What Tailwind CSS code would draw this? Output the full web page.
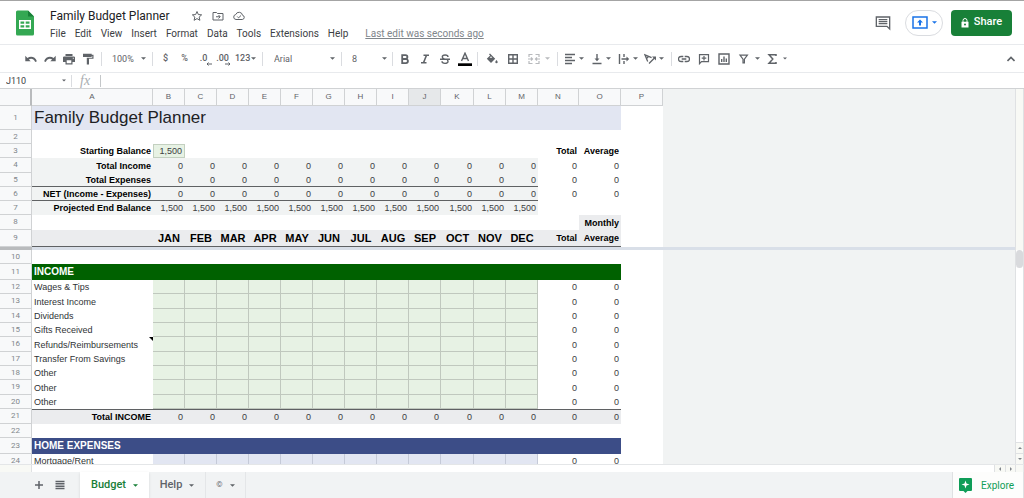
<!DOCTYPE html>
<html lang="en">
<head>
<meta charset="utf-8">
<meta name="viewport" content="width=device-width, initial-scale=1">
<title>Family Budget Planner</title>
<script src="https://cdn.jsdelivr.net/npm/@tailwindcss/browser@4"></script>
</head>
<body class="flex h-screen flex-col overflow-hidden bg-white font-['Roboto',sans-serif] text-[#202124]">
<svg class="hidden" aria-hidden="true">
  <symbol id="caret" viewBox="0 0 6 3"><path d="M0 0h6L3 3z" fill="currentColor"/></symbol>
</svg>

<header class="flex h-[45px] shrink-0 items-center border-t border-b border-t-[#a4a4a4] border-b-[#e8eaed] pl-4 pr-3">
  <svg class="h-[26px] w-[18px] shrink-0" viewBox="0 0 18 25" aria-label="Sheets"><path d="M1.500 0H12l6 6v17.500a1.500 1.500 0 0 1-1.500 1.500h-15A1.500 1.500 0 0 1 0 23.500v-22A1.500 1.500 0 0 1 1.500 0z" fill="#34a853"/><path d="M12 0l6 6h-6z" fill="#188038"/><path d="M3 9.500h12v9H3zM4.500 11v2.200h3.700V11zm5.200 0v2.200h3.800V11zm-5.200 3.700V17h3.700v-2.300zm5.200 0V17h3.800v-2.300z" fill="#fff" fill-rule="evenodd"/></svg>
  <div class="ml-4 flex min-w-0 flex-1 flex-col pt-1">
    <div class="flex h-[18px] items-center text-[#5f6368]">
      <h1 class="text-[12px] leading-4 text-[#202124]">Family Budget Planner</h1>
      <button class="ml-[21px]" aria-label="Star"><svg class="size-3" viewBox="0 0 24 24" fill="none" stroke="currentColor" stroke-width="2"><path d="M12 3l2.700 6.100 6.600.6-5 4.400 1.500 6.500L12 17.200l-5.800 3.400 1.500-6.500-5-4.400 6.600-.6z"/></svg></button>
      <button class="ml-[9px]" aria-label="Move"><svg class="size-3" viewBox="0 0 24 24" fill="none" stroke="currentColor" stroke-width="2"><path d="M2 5h7l2 2h11v13H2zM8 13.500h8M13 10l3.500 3.500L13 17"/></svg></button>
      <button class="ml-[9px]" aria-label="Document status"><svg class="size-3" viewBox="0 0 24 24" fill="none" stroke="currentColor" stroke-width="2"><path d="M6 19a5 5 0 0 1-.5-9.900A7 7 0 0 1 19 10.500 4.300 4.300 0 0 1 18.500 19zM8.500 13l2.700 2.700L16 11"/></svg></button>
    </div>
    <nav class="flex h-[18px] items-center gap-[9px] text-[10px] leading-4 text-[#3c4043]">
      <button>File</button><button>Edit</button><button>View</button><button>Insert</button><button>Format</button><button>Data</button><button>Tools</button><button>Extensions</button><button>Help</button>
      <a href="#history" class="ml-2 text-[#80868b] underline">Last edit was seconds ago</a>
    </nav>
  </div>
  <div class="flex items-center">
    <button class="mr-[14px] text-[#5f6368]" aria-label="Comments"><svg class="size-4" viewBox="0 0 24 24" fill="none" stroke="currentColor" stroke-width="2"><path d="M2 3h20v18l-4-4H2zM5.500 7h13M5.500 10h13M5.500 13h13"/></svg></button>
    <button class="mr-2 flex h-[26px] w-[38px] items-center justify-center gap-1 rounded-full border border-[#dadce0] text-[#1a73e8]" aria-label="Present"><svg class="h-[13px] w-4" viewBox="0 0 16 13"><path d="M1 1h14v11H1z" fill="none" stroke="currentColor" stroke-width="1.500"/><path d="M8 3.500l3 3H9V9.500H7v-3H5z" fill="currentColor"/></svg><svg class="h-[3px] w-[5px]"><use href="#caret"/></svg></button>
    <button class="flex h-[26px] w-[61px] items-center justify-center gap-[5px] rounded bg-[#188038] text-[11px] font-medium text-white"><svg class="h-[10px] w-2" viewBox="0 0 8 10"><path d="M2 4V2.500a2 2 0 0 1 4 0V4" fill="none" stroke="#fff"/><path d="M.5 3.800h7V9.500h-7zM4 5.600a1 1 0 1 0 0 2 1 1 0 0 0 0-2z" fill="#fff" fill-rule="evenodd"/></svg>Share</button>
  </div>
</header>

<div class="flex h-7 shrink-0 items-center border-b border-[#e8eaed] pl-5 text-[9px] text-[#5f6368]" role="toolbar" aria-label="Main toolbar">
  <div class="flex h-[14px] w-[82px] items-center justify-between border-r border-[#dadce0] pl-[5px] pr-[7px]">
    <button aria-label="Undo"><svg class="size-3" viewBox="0 0 12 12"><path d="M.3 2.800v5.400h5.400L3.900 6.500C5.800 5.200 8.800 5.600 10.200 8.900l1.700-.6C10.300 3.400 5.600 2.600 2.400 4.900z" fill="currentColor"/></svg></button>
    <button aria-label="Redo"><svg class="size-3" viewBox="0 0 12 12"><path d="M11.700 2.800v5.400H6.300l1.800-1.700C6.200 5.200 3.200 5.600 1.800 8.900L.1 8.300C1.700 3.400 6.400 2.600 9.600 4.900z" fill="currentColor"/></svg></button>
    <button aria-label="Print"><svg class="size-3" viewBox="0 0 12 12"><path d="M2.500 1h7v2h-7zM1.500 3.500h9A1.300 1.300 0 0 1 12 5v4H9.500v2.500h-7V9H0V5a1.300 1.300 0 0 1 1.500-1.500zM3.700 7.200v3h4.600v-3zM9.800 4.800v1h1v-1z" fill="currentColor" fill-rule="evenodd"/></svg></button>
    <button aria-label="Paint format"><svg class="size-3" viewBox="0 0 12 12"><path d="M1 .8h8.700v1h1.800v4H7v5.700H4.800V4.700h5.500V3H9.700v1H1z" fill="currentColor"/></svg></button>
  </div>
  <div class="relative flex h-[14px] w-[51px] items-center border-r border-[#dadce0]">
    <select aria-label="Zoom" class="w-full appearance-none bg-transparent pl-[10px] leading-3"><option>100%</option></select>
    <svg class="pointer-events-none absolute right-[6px] h-[3px] w-[5px]"><use href="#caret"/></svg>
  </div>
  <div class="flex h-[14px] w-[110px] items-center border-r border-[#dadce0] pl-[3px] font-medium">
    <button class="w-[19px]" aria-label="Currency">$</button>
    <button class="w-[19px]" aria-label="Percent">%</button>
    <button class="relative w-[19px]" aria-label="Decrease decimals">.0<svg class="absolute right-px -bottom-px h-1 w-[6px]" viewBox="0 0 6 4"><path d="M6 2H1M2.500.5L1 2l1.500 1.500" fill="none" stroke="currentColor"/></svg></button>
    <button class="relative w-[19px]" aria-label="Increase decimals">.00<svg class="absolute right-px -bottom-px h-1 w-[6px]" viewBox="0 0 6 4"><path d="M0 2h5M3.500.5L5 2 3.500 3.500" fill="none" stroke="currentColor"/></svg></button>
    <button class="ml-[3px] flex items-center gap-px" aria-label="More formats">123<svg class="h-[3px] w-[5px]"><use href="#caret"/></svg></button>
  </div>
  <div class="relative flex h-[14px] w-[79px] items-center border-r border-[#dadce0]">
    <select aria-label="Font" class="w-full appearance-none bg-transparent pl-[11px] leading-3"><option>Arial</option></select>
    <svg class="pointer-events-none absolute right-[6px] h-[3px] w-[5px]"><use href="#caret"/></svg>
  </div>
  <div class="relative flex h-[14px] w-[51px] items-center border-r border-[#dadce0]">
    <select aria-label="Font size" class="w-full appearance-none bg-transparent pl-[10px] leading-3"><option>8</option></select>
    <svg class="pointer-events-none absolute right-[5px] h-[3px] w-[5px]"><use href="#caret"/></svg>
  </div>
  <div class="flex h-[14px] w-[85px] items-center border-r border-[#dadce0] pl-[2px]">
    <button class="flex w-5 justify-center" aria-label="Bold"><svg class="size-3" viewBox="0 0 12 12"><path d="M3.200 2.200h3.300a1.900 1.900 0 0 1 0 3.800H3.200zM3.200 6h3.700a2 2 0 0 1 0 4.100H3.200z" fill="none" stroke="currentColor" stroke-width="1.800"/></svg></button>
    <button class="flex w-5 justify-center" aria-label="Italic"><svg class="size-3" viewBox="0 0 12 12"><path d="M4.500 2.300H10M2 9.700h5.500M7.500 2.300L4.500 9.700" fill="none" stroke="currentColor" stroke-width="1.600"/></svg></button>
    <button class="flex w-5 justify-center" aria-label="Strikethrough"><svg class="size-3" viewBox="0 0 12 12"><path d="M1 6.300h10M9 3.900C9 1.300 3.300 1.300 3.300 3.900c0 1 .9 1.500 2 1.900M3 8.300c0 2.700 6 2.700 6 .2 0-.7-.3-1.200-.8-1.600" fill="none" stroke="currentColor" stroke-width="1.400"/></svg></button>
    <button class="flex w-5 justify-center" aria-label="Text color"><svg class="h-[14px] w-[14px]" viewBox="0 0 14 14"><path d="M3.500 9L7 1.200 10.500 9M4.700 6.500h4.600" fill="none" stroke="currentColor" stroke-width="1.400"/><path d="M0 11.300h14V14H0z" fill="#000"/></svg></button>
  </div>
  <div class="flex h-[14px] w-[80px] items-center border-r border-[#dadce0] pl-[3px]">
    <button class="flex w-[21px] justify-center" aria-label="Fill color"><svg class="size-3" viewBox="0 0 12 12"><path d="M4 .5l5.200 5.200L5 9.900.8 5.700 4.100 2.400 3 1.300zM5 3.300L3.600 4.700h2.800zM10.500 7s1.200 1.300 1.200 2a1.200 1.200 0 0 1-2.400 0c0-.7 1.200-2 1.200-2z" fill="currentColor" fill-rule="evenodd"/></svg></button>
    <button class="flex w-[21px] justify-center" aria-label="Borders"><svg class="size-3" viewBox="0 0 12 12"><path d="M1.700 1.700h8.600v8.600H1.700zM6 1.700v8.600M1.700 6h8.600" fill="none" stroke="currentColor" stroke-width="1.400"/></svg></button>
    <button class="flex w-[21px] justify-center text-[#b8babd]" aria-label="Merge cells"><svg class="size-3" viewBox="0 0 12 12"><path d="M4.500 1.500H1V4M7.500 1.500H11V4M4.500 10.500H1V8M7.500 10.500H11V8M0 6h4.500M12 6H7.500M3 4.500L4.500 6 3 7.500M9 4.500L7.500 6 9 7.500" fill="none" stroke="currentColor" stroke-width="1.200"/></svg></button>
    <button class="ml-px text-[#b8babd]" aria-label="Merge type"><svg class="h-[3px] w-[5px]"><use href="#caret"/></svg></button>
  </div>
  <div class="flex h-[14px] w-[114px] items-center border-r border-[#dadce0] pl-[6px]">
    <button class="flex w-[27px] items-center gap-[3px]" aria-label="Horizontal align"><svg class="size-3" viewBox="0 0 12 12"><path d="M1 1.500h10M1 4.500h7M1 7.500h10M1 10.500h7" fill="none" stroke="currentColor" stroke-width="1.400"/></svg><svg class="h-[3px] w-[5px]"><use href="#caret"/></svg></button>
    <button class="flex w-[27px] items-center gap-[3px]" aria-label="Vertical align"><svg class="size-3" viewBox="0 0 12 12"><path d="M1.500 10.500h9M6 1v6" fill="none" stroke="currentColor" stroke-width="1.400"/><path d="M3.500 5.500h5L6 8.300z" fill="currentColor"/></svg><svg class="h-[3px] w-[5px]"><use href="#caret"/></svg></button>
    <button class="flex w-[27px] items-center gap-[3px]" aria-label="Text wrapping"><svg class="size-3" viewBox="0 0 12 12"><path d="M1.500 1v10M6 1v3M6 8v3M3.500 6H10" fill="none" stroke="currentColor" stroke-width="1.400"/><path d="M8.500 3.500v5L11.200 6z" fill="currentColor"/></svg><svg class="h-[3px] w-[5px]"><use href="#caret"/></svg></button>
    <button class="flex w-[27px] items-center gap-[3px]" aria-label="Text rotation"><svg class="size-3" viewBox="0 0 12 12"><path d="M3.700 8.500L.9 1.800 7.600 4.600M2.600 5.500L4.700 3.400M5 10.500L10.500 5" fill="none" stroke="currentColor" stroke-width="1.300"/><path d="M8 3.500h4v4z" fill="currentColor"/></svg><svg class="h-[3px] w-[5px]"><use href="#caret"/></svg></button>
  </div>
  <div class="flex items-center pl-[2px]">
    <button class="flex w-5 justify-center" aria-label="Insert link"><svg class="size-3" viewBox="0 0 12 12"><path d="M5.300 3.500H3a2.500 2.500 0 0 0 0 5h2.300M6.700 3.500H9a2.500 2.500 0 0 1 0 5H6.700M3.700 6h4.600" fill="none" stroke="currentColor" stroke-width="1.300"/></svg></button>
    <button class="flex w-5 justify-center" aria-label="Insert comment"><svg class="size-3" viewBox="0 0 12 12"><path d="M1.500 10.700V1.600h9v7h-7zM6 3v4.500M3.700 5.200h4.600" fill="none" stroke="currentColor" stroke-width="1.200"/></svg></button>
    <button class="flex w-5 justify-center" aria-label="Insert chart"><svg class="size-3" viewBox="0 0 12 12"><path d="M1 1h10v10H1zM3.700 9V6M6 9V3.500M8.300 9V5.500" fill="none" stroke="currentColor" stroke-width="1.400"/></svg></button>
    <button class="flex w-5 justify-center" aria-label="Create filter"><svg class="size-3" viewBox="0 0 12 12"><path d="M2 2.200h7.400L6.400 6.200V9.800H5V6.200z" fill="none" stroke="currentColor" stroke-width="1.200"/></svg></button>
    <button class="w-3" aria-label="Filter views"><svg class="ml-px h-[3px] w-[5px]"><use href="#caret"/></svg></button>
    <button class="flex w-4 items-center" aria-label="Functions"><svg class="size-3" viewBox="0 0 12 12"><path d="M10 3V1.700H3L6.800 6 3 10.300h7V9" fill="none" stroke="currentColor" stroke-width="1.500"/></svg></button>
    <button class="pl-px" aria-label="More functions"><svg class="h-[3px] w-1"><use href="#caret"/></svg></button>
  </div>
  <button class="mr-[9px] ml-auto" aria-label="Hide the menus"><svg class="h-2 w-2" viewBox="0 0 8 8"><path d="M.5 6L4 2.500 7.500 6" fill="none" stroke="currentColor" stroke-width="1.600"/></svg></button>
</div>

<div class="flex h-4 shrink-0 items-center border-b border-[#d0d2d4]">
  <input aria-label="Name box" value="J110" class="w-[60px] pl-[6px] text-[9px] leading-3 text-[#3c4043]">
  <button class="flex h-3 w-3 items-center border-r border-[#dadce0] pl-[2px] text-[#5f6368]" aria-label="Named ranges"><svg class="h-[3px] w-1"><use href="#caret"/></svg></button>
  <label for="fx" class="w-[29px] border-r border-[#c4c7c9] pl-2 font-['Liberation_Serif',serif] text-[14px] leading-3 text-[#a9adb1] italic">fx</label>
  <input id="fx" class="min-w-0 flex-1 px-1 text-[9px] leading-3">
</div>

<main class="flex min-h-0 flex-1 border-r border-[#dfe1e3]">
  <div class="min-w-0 flex-1 overflow-hidden bg-[#f1f3f3] font-['Liberation_Sans',sans-serif] text-[9px] leading-3">
    <table id="frozen" class="w-[663px] table-fixed border-separate border-spacing-0 bg-white"></table>
    <div class="flex h-[3px] bg-[#d9dfe8]"><div class="w-8 bg-[#b9bbbd]"></div></div>
    <table id="scrolling" class="w-[663px] table-fixed border-separate border-spacing-0 bg-white"></table>
  </div>
  <div class="flex w-2 shrink-0 flex-col border-l border-[#dfe1e3] text-[#80868b]">
    <div class="h-[161px] bg-[#f8f9f5]"></div>
    <div class="h-[18px] rounded-full bg-[#d9dadd]"></div>
    <button class="mt-auto flex h-[11px] items-center justify-center border-t border-[#dfe1e3] bg-[#f8f9f5]" aria-label="Scroll up"><svg class="h-[2px] w-1 rotate-180"><use href="#caret"/></svg></button>
    <button class="flex h-[11px] items-center justify-center border-t border-[#dfe1e3] bg-[#f8f9f5]" aria-label="Scroll down"><svg class="h-[2px] w-1"><use href="#caret"/></svg></button>
  </div>
</main>

<div class="flex h-2 shrink-0 border-t border-r border-[#e4e6e8] text-[#80868b]">
  <div class="w-8 border-r border-[#dfe1e3] bg-[#f8f9f5]"></div>
  <div class="flex-1"></div>
  <button class="flex w-[11px] items-center justify-center border-l border-[#dfe1e3] bg-[#f8f9f5]" aria-label="Scroll left"><svg class="h-1 w-[2px]" viewBox="0 0 2 4"><path d="M2 0v4L0 2z" fill="currentColor"/></svg></button>
  <button class="flex w-[10px] items-center justify-center border-l border-[#dfe1e3] bg-[#f8f9f5]" aria-label="Scroll right"><svg class="h-1 w-[2px]" viewBox="0 0 2 4"><path d="M0 0v4l2-2z" fill="currentColor"/></svg></button>
  <div class="w-2 border-l border-[#dfe1e3] bg-[#f8f9f5]"></div>
</div>

<footer class="flex h-[26px] shrink-0 items-stretch bg-[#f1f3f4] text-[11px] text-[#5f6368]">
  <button class="ml-[33px] w-3" aria-label="Add sheet"><svg class="size-3" viewBox="0 0 12 12"><path d="M6 2v8M2 6h8" stroke="currentColor" stroke-width="1.500"/></svg></button>
  <button class="ml-[9px] w-3" aria-label="All sheets"><svg class="size-3" viewBox="0 0 12 12"><path d="M1.500 2.500h9M1.500 4.800h9M1.500 7.200h9M1.500 9.500h9" stroke="currentColor" stroke-width="1.400"/></svg></button>
  <button class="ml-[14px] flex w-[69px] items-center justify-center gap-[7px] bg-white font-medium text-[#188038] shadow-sm">Budget<svg class="h-[3px] w-[5px]"><use href="#caret"/></svg></button>
  <button class="flex w-[57px] items-center justify-center gap-[7px] border-r border-[#e4e6e8] font-medium">Help<svg class="h-[3px] w-[5px]"><use href="#caret"/></svg></button>
  <button class="flex w-10 items-center justify-center gap-[7px] border-r border-[#e4e6e8] text-[8px]">©<svg class="h-[3px] w-[5px]"><use href="#caret"/></svg></button>
  <button class="ml-auto flex w-[72px] items-center gap-[9px] border-x border-[#dfe1e3] bg-[#fdfdfc] pl-[6px] text-[10px] text-[#0f9d58]"><svg class="h-[15px] w-[13px]" viewBox="0 0 13 15"><path d="M1 0h11a1 1 0 0 1 1 1v11a1 1 0 0 1-1 1H8.500l-2 2-2-2H1a1 1 0 0 1-1-1V1a1 1 0 0 1 1-1z" fill="#0f9d58"/><path d="M6.500 2.500l1 3 3 1-3 1-1 3-1-3-3-1 3-1z" fill="#fff"/></svg>Explore</button>
</footer>

<script>
const letters = 'ABCDEFGHIJKLMNOP'.split('');
const widths = [32, 121, 32, 32, 32, 32, 32, 32, 32, 32, 32, 33, 32, 32, 41, 42, 42];
const months = ['JAN','FEB','MAR','APR','MAY','JUN','JUL','AUG','SEP','OCT','NOV','DEC'];
const twelve = v => Array(12).fill(v);

const num = 'pr-[2px] text-right text-[9px] text-[#3c4043]';
const label = 'pr-[2px] text-right font-bold text-black';
const pale = ' bg-[#f1f3f3]';
const grey = ' bg-[#ebecee]';
const line = ' border-b border-[#5f6163]';
const green = 'border-r border-b border-[#c0c8be] bg-[#e7f2e4]';
const blue = 'border-r border-b border-[#c5cad8] bg-[#e2e6f2]';

// A row is [number, height, cells]; a cell is [text, classes, colspan].
const cells = (values, cls) => values.map(v => [v, cls]);
const summary = (n, h, name, value, extra, totals) =>
  [n, h, [[name, label + pale + extra], ...cells(twelve(value), num + pale + extra), ...cells(totals, num)]];
const entry = (n, h, name, cls) =>
  [n, h, [[name, 'pl-[2px] text-[9px] text-[#303336]' + (name.startsWith('Refunds') ? ' note' : '')], ...cells(twelve(''), cls), ...cells(['0','0'], num)]];

const frozen = [
  [1, 24, [['Family Budget Planner', 'bg-[#e2e6f2] pl-[2px] text-[17px] leading-5 text-[#202124] align-middle', 15]]],
  [2, 14, []],
  [3, 14, [['Starting Balance', label], ['1,500', num + ' border border-[#c3d0c0] bg-[#e7f2e4]'], ...cells(Array(11).fill(''), ''), ['Total', label], ['Average', label]]],
  summary(4, 15, 'Total Income', '0', '', ['0','0']),
  summary(5, 14, 'Total Expenses', '0', line, ['0','0']),
  summary(6, 14, 'NET (Income - Expenses)', '0', line, ['0','0']),
  summary(7, 14, 'Projected End Balance', '1,500', '', ['','']),
  [8, 15, [...cells(Array(14).fill(''), ''), ['Monthly', label + grey]]],
  [9, 17, [['', grey + line], ...cells(months, 'text-center text-[11px] font-bold text-black' + grey + line), ['Total', label + grey + line], ['Average', label + grey + line]]],
];
const scrolling = [
  [10, 14, []],
  [11, 16, [['INCOME', 'bg-[#006100] pl-[2px] text-[10px] font-bold text-white align-middle', 15]]],
  entry(12, 14, 'Wages & Tips', green),
  entry(13, 15, 'Interest Income', green),
  entry(14, 14, 'Dividends', green),
  entry(15, 14, 'Gifts Received', green),
  entry(16, 15, 'Refunds/Reimbursements', green),
  entry(17, 14, 'Transfer From Savings', green),
  entry(18, 14, 'Other', green),
  entry(19, 15, 'Other', green),
  entry(20, 14, 'Other', green),
  [21, 15, [['Total INCOME', label + ' border-t border-[#5f6163]' + grey], ...cells(Array(14).fill('0'), num + ' border-t border-[#5f6163]' + grey)]],
  [22, 14, []],
  [23, 16, [['HOME EXPENSES', 'bg-[#3c4d87] pl-[2px] text-[10px] font-bold text-white align-middle', 15]]],
  entry(24, 14, 'Mortgage/Rent', blue),
];

function fill(id, rows, withHead) {
  const table = document.getElementById(id);
  const group = document.createElement('colgroup');
  for (const w of widths) {
    const col = document.createElement('col');
    col.style.width = w + 'px';
    group.append(col);
  }
  table.append(group);
  if (withHead) {
    const tr = table.createTHead().insertRow();
    tr.style.height = '17px';
    ['', ...letters].forEach((text, i) => {
      const th = document.createElement('th');
      th.textContent = text;
      th.className = i === 0
        ? 'border-r-2 border-b border-r-[#b9bbbd] border-b-[#d0d2d4] bg-[#f8f9fa]'
        : 'border-r border-b border-[#d0d2d4] text-center text-[8px] font-normal text-[#5f6368] ' + (text === 'J' ? 'bg-[#e6e8ea]' : 'bg-[#f8f9fa]');
      tr.append(th);
    });
  }
  const body = table.createTBody();
  for (const [n, h, list] of rows) {
    const tr = body.insertRow();
    tr.style.height = h + 'px';
    const th = document.createElement('th');
    th.scope = 'row';
    th.textContent = n;
    th.className = "border-r border-b border-[#d0d2d4] bg-[#f8f9fa] text-center font-['Roboto',sans-serif] text-[8px] leading-3 font-normal text-[#80868b]";
    tr.append(th);
    let used = 0;
    for (const [text, cls, span = 1] of list) {
      const td = tr.insertCell();
      td.colSpan = span;
      td.textContent = text;
      td.className = 'p-0 whitespace-nowrap ' + cls;
      used += span;
      if (cls.endsWith('note')) {
        td.classList.add('relative');
        const mark = document.createElement('span');
        mark.className = 'absolute top-0 right-0 size-1 bg-black [clip-path:polygon(0_0,100%_0,100%_100%)]';
        td.append(mark);
      }
    }
    if (used < 16) {
      const rest = tr.insertCell();
      rest.colSpan = 16 - used;
    }
  }
}
fill('frozen', frozen, true);
fill('scrolling', scrolling, false);
</script>
</body>
</html>
